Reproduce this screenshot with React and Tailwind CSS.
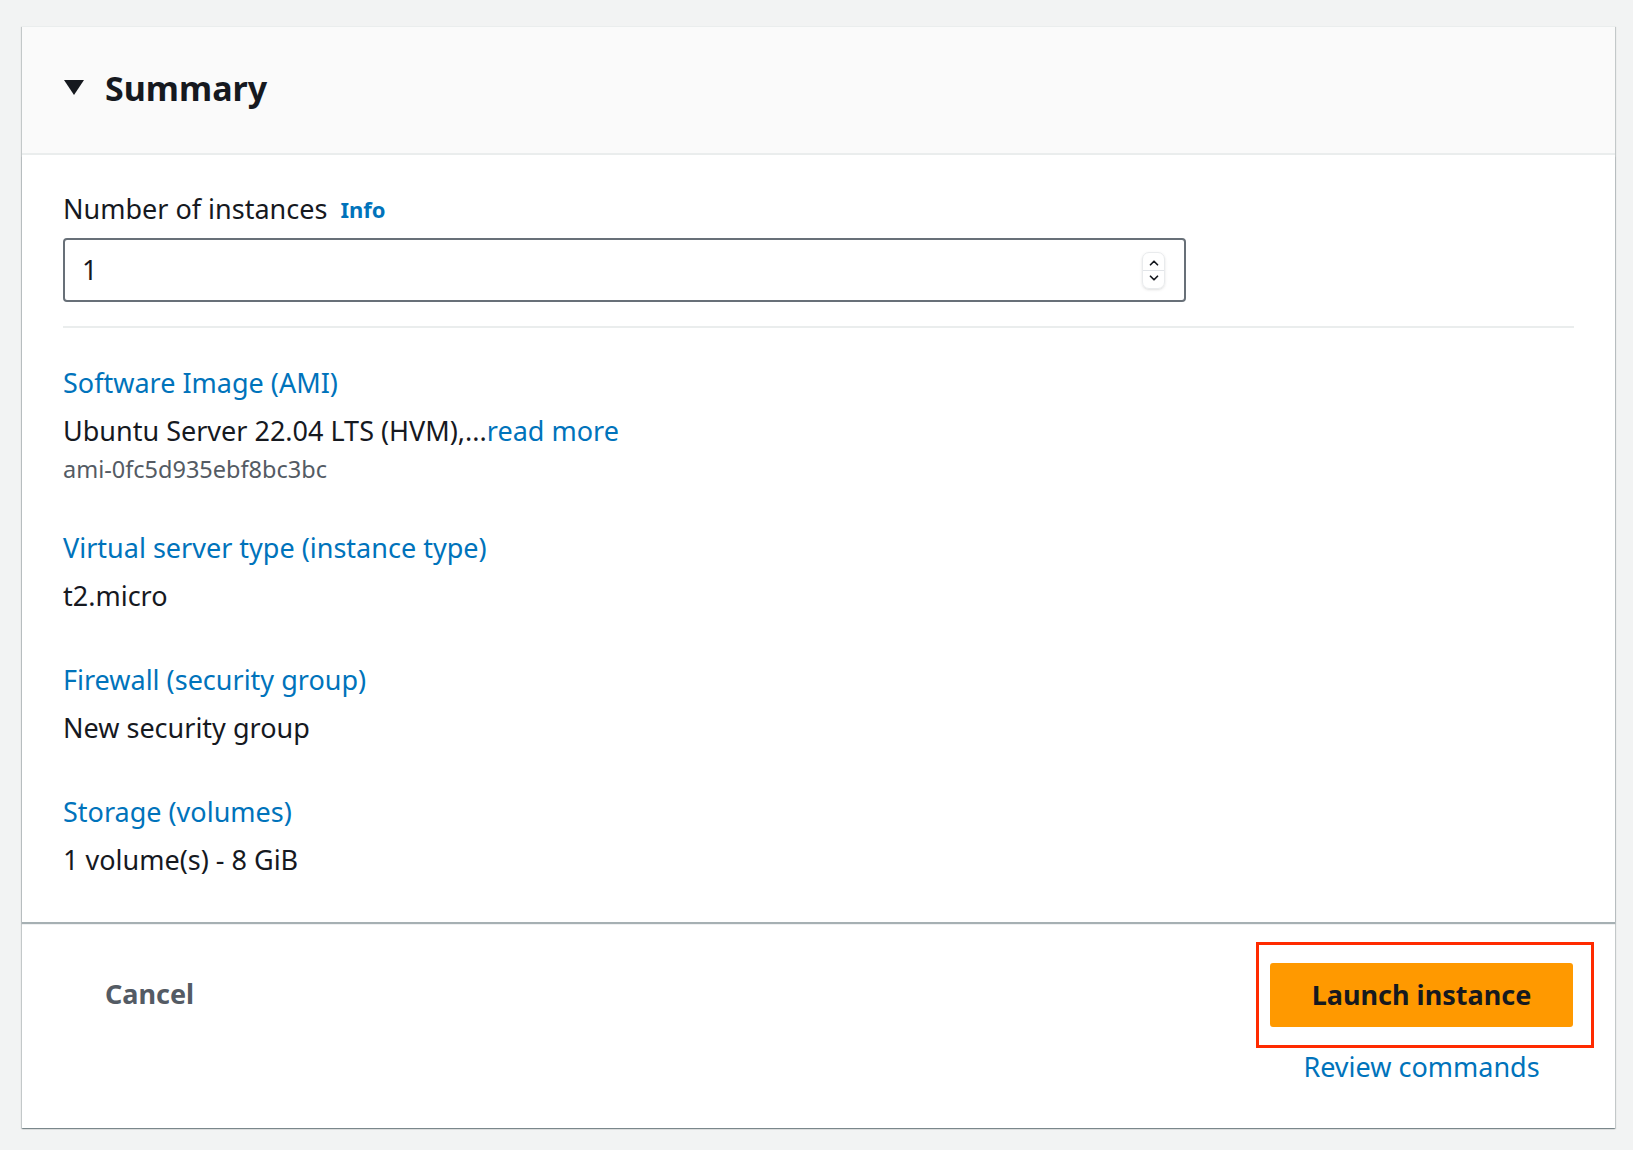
import { ChevronUp, ChevronDown } from 'lucide-react';

const font = { fontFamily: '"Noto Sans", "Open Sans", sans-serif' };

function Field({ label, children }) {
  return (
    <div className="flex flex-col">
      <a className="text-[27px] leading-[34px] text-[#0073bb]">{label}</a>
      {children}
    </div>
  );
}

export default function App() {
  return (
    <div className="min-h-[1150px] bg-[#f2f3f3] pt-[26px] pb-[22px] px-[18px] pl-[22px]" style={font}>
      <div className="w-[1593px] bg-white shadow-[0_1px_1px_0_rgba(0,28,36,0.3),1px_1px_1px_0_rgba(0,28,36,0.15),-1px_1px_1px_0_rgba(0,28,36,0.15)]">
        {/* header */}
        <div className="h-[129px] bg-[#fafafa] border-b-2 border-[#eaeded] flex items-center pl-[42px] pb-[4px] border-t border-t-[#eaeded]">
          <svg width="20" height="16" viewBox="0 0 20 16" className="mr-[21px]">
            <polygon points="0,0 20,0 10,15" fill="#16191f" />
          </svg>
          <h2 className="text-[34px] font-bold text-[#16191f] leading-none">Summary</h2>
        </div>

        {/* body */}
        <div className="px-[41px] pt-[37px] pb-[45px] shadow-[0_2px_1px_0_rgba(0,28,36,0.35)] relative">
          <div className="flex items-center gap-[13px] h-[34px]">
            <span className="text-[27px] text-[#16191f]">Number of instances</span>
            <a className="text-[22px] font-bold text-[#0073bb]">Info</a>
          </div>
          <div className="mt-[12px] w-[1123px] h-[64px] border-2 border-[#687078] rounded-[4px] flex items-center justify-between pl-[17px] pr-[19px]">
            <span className="text-[27px] text-[#16191f]">1</span>
            <div className="w-[23px] h-[37px] border border-[#e9ebed] rounded-[7px] flex flex-col items-center justify-center shadow-sm">
              <ChevronUp size={14} strokeWidth={3} className="text-[#16191f]" />
              <div className="w-full h-px bg-[#e1e4e8]" />
              <ChevronDown size={14} strokeWidth={3} className="text-[#16191f]" />
            </div>
          </div>
          <div className="mt-[24px] h-[2px] bg-[#eaeded]" />

          <div className="mt-[38px] flex flex-col gap-[50px]">
            <Field label="Software Image (AMI)">
              <div className="mt-[14px] text-[27px] leading-[34px] text-[#16191f]">
                Ubuntu Server 22.04 LTS (HVM),...<a className="text-[#0073bb]">read more</a>
              </div>
              <div className="mt-[6px] mb-[-3px] text-[23.5px] leading-[30px] text-[#545b64]">ami-0fc5d935ebf8bc3bc</div>
            </Field>
            <Field label="Virtual server type (instance type)">
              <div className="mt-[14px] text-[27px] leading-[34px] text-[#16191f]">t2.micro</div>
            </Field>
            <Field label="Firewall (security group)">
              <div className="mt-[14px] text-[27px] leading-[34px] text-[#16191f]">New security group</div>
            </Field>
            <Field label="Storage (volumes)">
              <div className="mt-[14px] text-[27px] leading-[34px] text-[#16191f]">1 volume(s) - 8 GiB</div>
            </Field>
          </div>
        </div>

        {/* footer */}
        <div className="h-[206px] flex justify-between pl-[83px] pr-[21px] pt-[20px]">
          <div className="h-[104px] flex items-center">
            <button className="text-[27px] font-bold text-[#545b64]">Cancel</button>
          </div>
          <div className="flex flex-col items-center">
            <div className="border-[3px] border-[#ff2a00] pl-[11px] pr-[18px] py-[18px]">
              <button className="w-[303px] h-[64px] bg-[#ff9900] rounded-[3px] text-[27px] font-bold text-[#16191f]">
                Launch instance
              </button>
            </div>
            <a className="mt-[2px] mr-[7px] text-[27px] leading-[34px] text-[#0073bb]">Review commands</a>
          </div>
        </div>
      </div>
    </div>
  );
}
